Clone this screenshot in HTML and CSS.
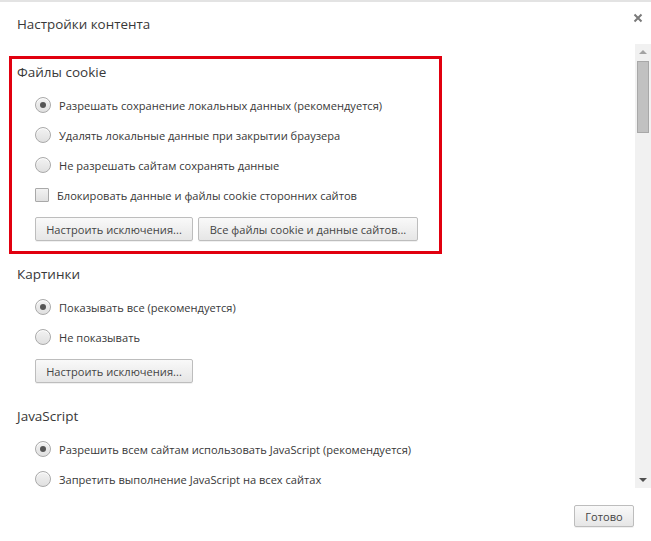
FILE: index.html
```html
<!DOCTYPE html>
<html lang="ru">
<head>
<meta charset="utf-8">
<title>Настройки контента</title>
<link rel="stylesheet" href="styles.css">
</head>
<body>
<div class="dialog">
  <div class="header">
    <span class="title">Настройки контента</span>
    <span class="close" aria-label="Закрыть">
      <svg width="10" height="10" viewBox="0 0 10 10"><path d="M1.5 1.5L8.5 8.5M8.5 1.5L1.5 8.5" stroke="#7a7a7a" stroke-width="2" fill="none"/></svg>
    </span>
  </div>
  <div class="body">
    <div class="scroll">
      <section class="sec sec-hl">
        <h3 class="sec-title">Файлы cookie</h3>
        <div class="rows">
          <label class="row"><span class="radio checked"></span><span class="lbl">Разрешать сохранение локальных данных (рекомендуется)</span></label>
          <label class="row"><span class="radio"></span><span class="lbl">Удалять локальные данные при закрытии браузера</span></label>
          <label class="row"><span class="radio"></span><span class="lbl">Не разрешать сайтам сохранять данные</span></label>
          <label class="row"><span class="check"></span><span class="lbl lbl-check">Блокировать данные и файлы cookie сторонних сайтов</span></label>
        </div>
        <div class="btns">
          <span class="btn btn-exc">Настроить исключения...</span>
          <span class="btn btn-all">Все файлы cookie и данные сайтов...</span>
        </div>
      </section>
      <section class="sec">
        <h3 class="sec-title">Картинки</h3>
        <div class="rows">
          <label class="row"><span class="radio checked"></span><span class="lbl">Показывать все (рекомендуется)</span></label>
          <label class="row"><span class="radio"></span><span class="lbl">Не показывать</span></label>
        </div>
        <div class="btns">
          <span class="btn btn-exc">Настроить исключения...</span>
        </div>
      </section>
      <section class="sec">
        <h3 class="sec-title">JavaScript</h3>
        <div class="rows">
          <label class="row"><span class="radio checked"></span><span class="lbl">Разрешить всем сайтам использовать JavaScript (рекомендуется)</span></label>
          <label class="row"><span class="radio"></span><span class="lbl">Запретить выполнение JavaScript на всех сайтах</span></label>
        </div>
      </section>
    </div>
    <div class="scrollbar">
      <div class="sb-btn"><span class="arrow-up"></span></div>
      <div class="sb-thumb"></div>
      <div class="sb-track"></div>
      <div class="sb-btn"><span class="arrow-down"></span></div>
    </div>
  </div>
  <div class="footer">
    <span class="btn btn-done">Готово</span>
  </div>
</div>
</body>
</html>
```
FILE: styles.css
```css
html, body {
  margin: 0;
  padding: 0;
  background: #ffffff;
}
body {
  font-family: "Open Sans", "Noto Sans", "Liberation Sans", sans-serif;
  font-size: 11.1px;
  color: #383838;
}
.dialog {
  width: 651px;
  height: 541px;
  border-top: 2px solid #e3e3e3;
  box-sizing: border-box;
  display: flex;
  flex-direction: column;
}
.header {
  height: 42px;
  display: flex;
  align-items: flex-start;
  justify-content: space-between;
  padding: 0 8px 0 17px;
  box-sizing: border-box;
}
.title {
  font-size: 13.4px;
  line-height: 20px;
  margin-top: 12px;
  color: #383838;
}
.close {
  display: flex;
  margin-top: 11px;
}
.body {
  height: 444px;
  display: flex;
}
.scroll {
  flex: 1;
  overflow: hidden;
  padding: 12px 0 0 9px;
}
.sec {
  width: 433px;
  box-sizing: border-box;
  border: 3px solid transparent;
  padding: 3px 0 10px 5px;
  margin: 0 0 4px 0;
}
.sec-hl {
  border-color: #e1000f;
}
.sec-title {
  margin: 0;
  font-size: 13.5px;
  font-weight: normal;
  line-height: 20px;
  color: #383838;
}
.rows {
  margin-top: 8px;
  display: flex;
  flex-direction: column;
  padding-left: 18px;
}
.row {
  height: 30px;
  display: flex;
  align-items: center;
}
.radio {
  width: 14px;
  height: 14px;
  border-radius: 50%;
  border: 1px solid #a9a9a9;
  background: linear-gradient(#f2f2f2, #e0e0e0);
  box-shadow: inset 0 1px 1px #ffffff;
  display: flex;
  align-items: center;
  justify-content: center;
  flex: none;
}
.radio.checked::after {
  content: "";
  width: 6px;
  height: 6px;
  border-radius: 50%;
  background: #555555;
}
.check {
  width: 12px;
  height: 12px;
  border: 1px solid #a9a9a9;
  border-radius: 1px;
  background: linear-gradient(#f2f2f2, #e0e0e0);
  flex: none;
}
.lbl {
  margin-left: 8px;
  white-space: nowrap;
}
.lbl-check {
  margin-left: 8px;
}
.btns {
  margin-top: 7px;
  padding-left: 18px;
  display: flex;
  gap: 5px;
}
.btn {
  height: 24px;
  box-sizing: border-box;
  border: 1px solid #bdbdbd;
  border-radius: 2px;
  background: linear-gradient(#f9f9f9, #e6e6e6);
  box-shadow: 0 1px 0 rgba(0,0,0,0.06);
  display: inline-flex;
  align-items: center;
  justify-content: center;
  color: #444;
  white-space: nowrap;
}
.btn-exc { width: 158px; }
.btn-all { width: 220px; }
.scrollbar {
  width: 16px;
  background: #f1f1f1;
  display: flex;
  flex-direction: column;
}
.sb-btn {
  height: 16px;
  display: flex;
  align-items: center;
  justify-content: center;
  flex: none;
}
.arrow-up {
  width: 0;
  height: 0;
  border-left: 4px solid transparent;
  border-right: 4px solid transparent;
  border-bottom: 4px solid #a3a3a3;
}
.arrow-down {
  width: 0;
  height: 0;
  border-left: 4px solid transparent;
  border-right: 4px solid transparent;
  border-top: 4px solid #505050;
}
.sb-thumb {
  height: 72px;
  margin: 1px 2px 0 2px;
  background: #c1c1c1;
  border: 1px solid #a8a8a8;
  box-sizing: border-box;
  flex: none;
}
.sb-track {
  flex: 1;
}
.footer {
  flex: 1;
  display: flex;
  align-items: flex-start;
  justify-content: flex-end;
  padding: 17px 17px 0 0;
}
.btn-done {
  width: 60px;
  height: 22px;
}
```
